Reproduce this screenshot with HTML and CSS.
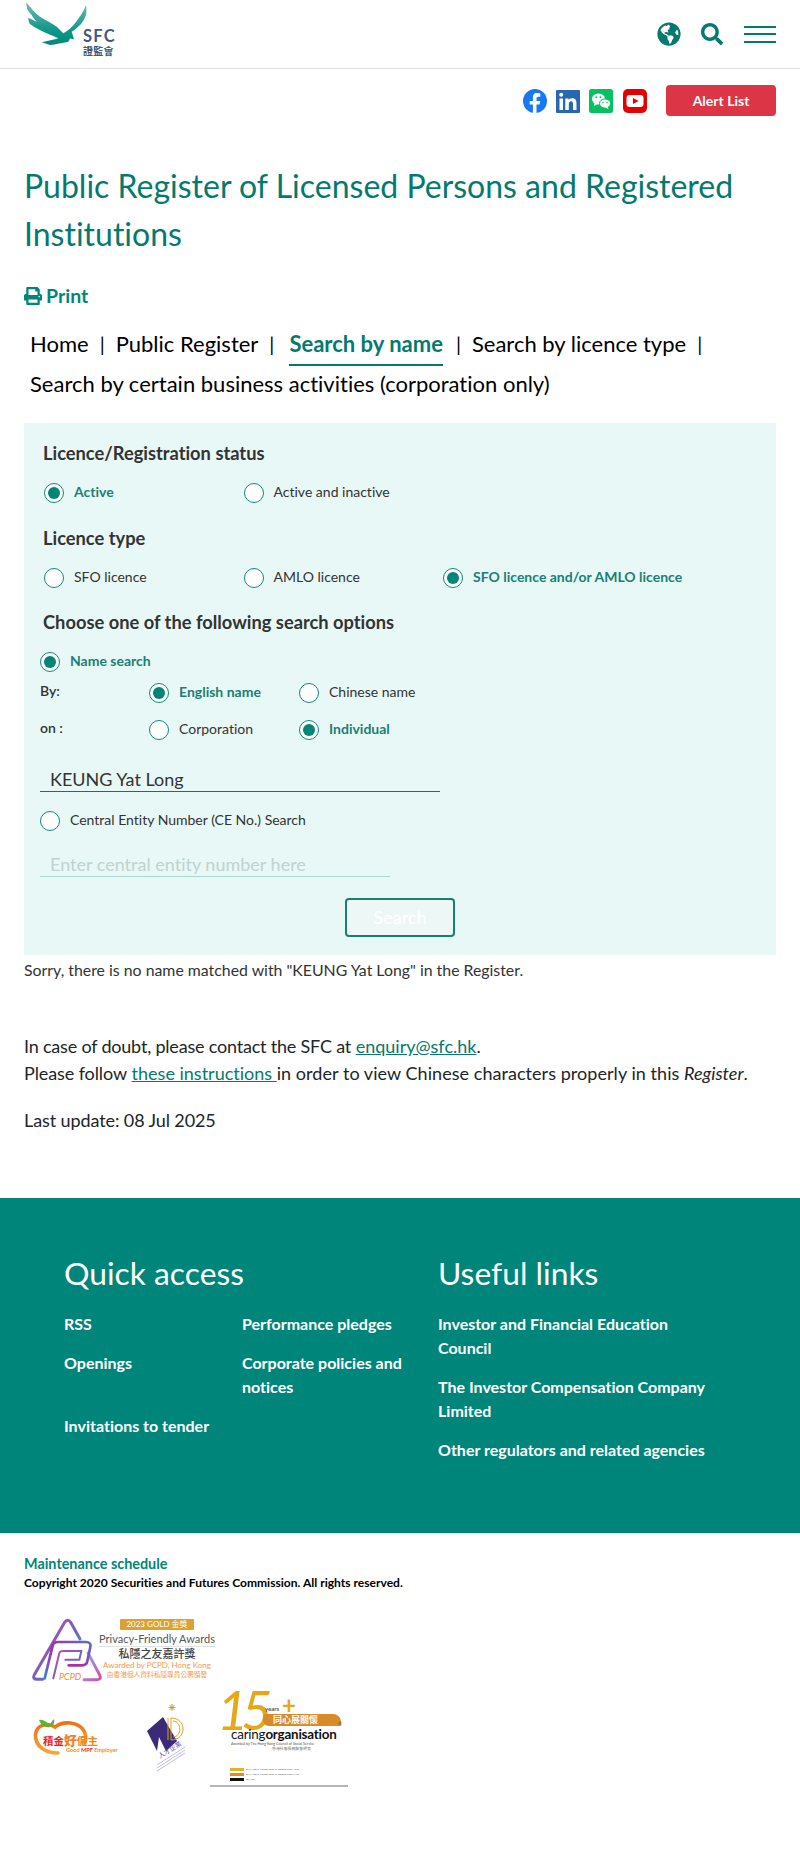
FILE: index.html
```html
<!DOCTYPE html>
<html lang="en">
<head>
<meta charset="utf-8">
<title>Public Register of Licensed Persons and Registered Institutions</title>
<link rel="stylesheet" href="styles.css">
</head>
<body>
<header class="topbar">
  <a class="logo">
    <svg class="eagle" width="64" height="48" viewBox="0 0 64 48" aria-hidden="true">
      <defs><linearGradient id="eg" x1="0" y1="0" x2="0" y2="1"><stop offset="0" stop-color="#6fbdb6"/><stop offset=".65" stop-color="#0d9889"/><stop offset="1" stop-color="#00897b"/></linearGradient></defs>
      <path fill="url(#eg)" d="M2.3 2.3 C7 8 11 13 16 16.7 C22 20.5 28 23 32.7 26.7 L39.3 33.3 C44 31 47.5 27.5 51 23.3 C55.5 17.5 60 11 62 5 C62.5 8.5 62.5 12 62 15 C60.5 19 58.5 22.5 56 25 C53.5 27.5 50.5 30 47.7 31.7 C48.5 34.5 49.5 37 50 39.3 L46 38.5 L44.3 41.7 C38 43 32 44.3 26 45 L17.7 42.3 L31 39.3 L34.3 38.3 C27 35 19 32 12.7 28.3 C10 27 7.5 25.5 5.3 23.3 C4.6 21.5 4.3 19.5 4.3 17.7 L12.7 21.7 C10.5 19.5 9 17.5 7.7 15 C5 12.5 3 9.5 2.7 6.7 Z"/>
    </svg>
    <span class="logo-text"><span class="logo-sfc">SFC</span><span class="logo-cn">證監會</span></span>
  </a>
  <nav class="tools">
    <svg class="globe" width="24" height="24" viewBox="0 0 496 512" aria-hidden="true">
      <path fill="#047a6e" d="M248 8C111.03 8 0 119.03 0 256s111.03 248 248 248 248-111.03 248-248S384.97 8 248 8zm82.29 357.6c-3.9 3.88-7.99 7.95-11.31 11.28-2.99 3-5.1 6.7-6.17 10.71-1.51 5.66-2.73 11.38-4.77 16.87l-17.39 46.85c-13.76 3-28 4.69-42.65 4.69v-27.38c1.69-12.62-7.64-36.26-22.63-51.25-6-6-9.37-14.14-9.37-22.63v-32.01c0-11.64-6.27-22.34-16.46-27.97-14.37-7.95-34.81-19.06-48.81-26.11-11.48-5.78-22.1-13.14-31.65-21.75l-.8-.72a114.792 114.792 0 0 1-18.06-20.74c-9.38-13.77-24.66-36.42-34.59-51.14 20.47-45.5 57.36-82.04 103.2-101.89l24.01 12.01C203.48 89.74 216 82.01 216 70.11v-11.3c7.99-1.29 16.12-2.11 24.39-2.42l28.3 28.3c6.25 6.25 6.25 16.38 0 22.63L264 112l-10.34 10.34c-3.12 3.12-3.12 8.19 0 11.31l4.69 4.69c3.12 3.12 3.12 8.19 0 11.31l-8 8a8.008 8.008 0 0 1-5.66 2.34h-8.99c-2.08 0-4.08.81-5.58 2.27l-9.92 9.65a8.008 8.008 0 0 0-1.58 9.31l15.59 31.19c2.66 5.32-1.21 11.58-7.15 11.58h-5.64c-1.93 0-3.79-.7-5.24-1.96l-9.28-8.06a16.017 16.017 0 0 0-15.55-3.1l-31.17 10.39a11.95 11.95 0 0 0-8.17 11.34c0 4.53 2.56 8.66 6.61 10.69l11.08 5.54c9.41 4.71 19.79 7.16 30.31 7.16s22.59 27.29 32 32h66.75c8.49 0 16.62 3.37 22.63 9.37l13.69 13.69a30.503 30.503 0 0 1 8.93 21.57 46.536 46.536 0 0 1-13.72 32.98zM417 274.25c-5.79-1.45-10.84-5-14.15-9.97l-17.98-26.97a23.97 23.97 0 0 1 0-26.62l19.59-29.38c2.32-3.47 5.5-6.28 9.24-8.15l12.98-6.49C440.2 193.59 448 223.87 448 256c0 8.67-.74 17.16-1.82 25.54L417 274.25z"/>
    </svg>
    <svg class="magnifier" width="22" height="22" viewBox="0 0 512 512" aria-hidden="true">
      <path fill="#047a6e" d="M505 442.7L405.3 343c-4.5-4.5-10.6-7-17-7H372c27.6-35.3 44-79.7 44-128C416 93.1 322.9 0 208 0S0 93.1 0 208s93.1 208 208 208c48.3 0 92.7-16.4 128-44v16.3c0 6.4 2.5 12.5 7 17l99.7 99.7c9.4 9.4 24.6 9.4 33.9 0l28.3-28.3c9.4-9.4 9.4-24.6.1-34zM208 336c-70.7 0-128-57.2-128-128 0-70.7 57.2-128 128-128 70.7 0 128 57.2 128 128 0 70.7-57.2 128-128 128z"/>
    </svg>
    <span class="burger"><i></i><i></i><i></i></span>
  </nav>
</header>

<div class="social">
  <svg width="24" height="24" viewBox="0 0 24 24" aria-hidden="true">
    <circle cx="12" cy="12" r="12" fill="#1877f2"/>
    <path fill="#fff" d="M16.6 15.4 L17.2 12 H13.5 V9.6 C13.5 8.6 14 7.8 15.4 7.8 H17.3 V4.4 C17.3 4.4 15.6 4.1 14 4.1 C10.7 4.1 9.9 6.2 9.9 8.9 V12 H6.7 V15.4 H9.9 V24 H13.5 V15.4 Z"/>
  </svg>
  <svg width="24" height="24" viewBox="0 0 24 24" aria-hidden="true">
    <rect width="24" height="23" y="1" rx="1" fill="#2867b2"/>
    <path fill="#fff" d="M3.5 9.5 H7 V21 H3.5 Z M5.2 3.8 A2 2 0 1 1 5.2 7.8 A2 2 0 1 1 5.2 3.8 Z M9.3 9.5 H12.6 V11 C13.2 10 14.4 9.2 16.1 9.2 C19.6 9.2 20.5 11.4 20.5 14.6 V21 H17 V15.4 C17 14 16.8 12.3 15 12.3 C13.2 12.3 12.8 13.7 12.8 15.3 V21 H9.3 Z"/>
  </svg>
  <svg width="24" height="24" viewBox="0 0 24 24" aria-hidden="true">
    <rect width="24" height="24" rx="2.5" fill="#07c160"/>
    <ellipse cx="9.5" cy="10" rx="6.5" ry="5.5" fill="#fff"/>
    <path fill="#fff" d="M5.5 13.5 L5 17 L8.5 15 Z"/>
    <ellipse cx="16" cy="14.5" rx="5.5" ry="4.6" fill="#fff" stroke="#07c160" stroke-width="1"/>
    <path fill="#fff" d="M18.5 17.5 L19.5 20 L16 18.5 Z"/>
    <circle cx="7.3" cy="8.3" r="1" fill="#07c160"/><circle cx="11.5" cy="8.3" r="1" fill="#07c160"/>
    <circle cx="14" cy="13.5" r=".8" fill="#07c160"/><circle cx="18" cy="13.5" r=".8" fill="#07c160"/>
  </svg>
  <svg width="24" height="24" viewBox="0 0 24 24" aria-hidden="true">
    <rect width="24" height="24" rx="5" fill="#e60000"/>
    <rect x="3.5" y="6" width="17" height="12" rx="3" fill="#fff"/>
    <path fill="#e60000" d="M10 9 L15.5 12 L10 15 Z"/>
  </svg>
  <a class="alert">Alert List</a>
</div>

<main class="content">
  <h1 class="title">Public Register of Licensed Persons and Registered Institutions</h1>
  <a class="print">
    <svg width="18" height="18" viewBox="0 0 512 512" aria-hidden="true">
      <path fill="#008577" d="M448 192V77.25c0-8.49-3.37-16.62-9.37-22.63L393.37 9.37c-6-6-14.14-9.37-22.63-9.37H96C78.33 0 64 14.33 64 32v160c-35.35 0-64 28.65-64 64v112c0 8.84 7.16 16 16 16h48v96c0 17.67 14.33 32 32 32h320c17.67 0 32-14.33 32-32v-96h48c8.84 0 16-7.16 16-16V256c0-35.35-28.65-64-64-64zm-64 256H128v-96h256v96zm0-224H128V64h192v48c0 8.84 7.16 16 16 16h48v96zm48 72c-13.25 0-24-10.75-24-24 0-13.26 10.75-24 24-24s24 10.74 24 24c0 13.25-10.75 24-24 24z"/>
    </svg>
    Print
  </a>
  <nav class="crumbs">
    <a>Home</a><span class="sep">|</span><a>Public Register</a><span class="sep">|</span><a class="current">Search by name</a><span class="sep">|</span><a>Search by licence type</a><span class="sep">|</span><a>Search by certain business activities (corporation only)</a>
  </nav>

  <form class="panel">
    <h2 class="group-title">Licence/Registration status</h2>
    <div class="radio-row">
      <label class="radio on w200"><i></i>Active</label>
      <label class="radio"><i></i>Active and inactive</label>
    </div>
    <h2 class="group-title">Licence type</h2>
    <div class="radio-row">
      <label class="radio w200"><i></i>SFO licence</label>
      <label class="radio w200"><i></i>AMLO licence</label>
      <label class="radio on"><i></i>SFO licence and/or AMLO licence</label>
    </div>
    <h2 class="group-title">Choose one of the following search options</h2>
    <label class="radio on tight name-search"><i></i>Name search</label>
    <div class="opt-row by-row">
      <span class="opt-label">By:</span>
      <label class="radio on w150"><i></i>English name</label>
      <label class="radio"><i></i>Chinese name</label>
    </div>
    <div class="opt-row on-row">
      <span class="opt-label">on :</span>
      <label class="radio w150"><i></i>Corporation</label>
      <label class="radio on"><i></i>Individual</label>
    </div>
    <div class="field name-field">KEUNG Yat Long</div>
    <label class="radio tight ce-search"><i></i>Central Entity Number (CE No.) Search</label>
    <div class="field ce-field">Enter central entity number here</div>
    <div class="actions"><button type="button" class="search">Search</button></div>
  </form>

  <p class="notice">Sorry, there is no name matched with "KEUNG Yat Long" in the Register.</p>
  <p class="doubt"><span class="snug">In case of doubt, please contact the SFC at</span> <a>enquiry@sfc.hk</a>.<br><span class="snug-lead">Please follow</span> <a>these instructions </a><span class="loose">in order to view Chinese characters properly in this</span> <em>Register</em>.</p>
  <p class="update">Last update: 08 Jul 2025</p>
</main>

<footer class="footer">
  <div class="quick">
    <h3>Quick access</h3>
    <ul class="quick-list">
      <li>RSS</li><li>Performance pledges</li>
      <li>Openings</li><li>Corporate policies and notices</li>
      <li>Invitations to tender</li>
    </ul>
  </div>
  <div class="useful">
    <h3>Useful links</h3>
    <ul>
      <li>Investor and Financial Education Council</li>
      <li>The Investor Compensation Company Limited</li>
      <li>Other regulators and related agencies</li>
    </ul>
  </div>
</footer>

<section class="legal">
  <a class="maint">Maintenance schedule</a>
  <p class="copy">Copyright 2020 Securities and Futures Commission. All rights reserved.</p>
  <div class="award-pcpd">
    <div class="pcpd-mark">
      <svg width="72" height="66" viewBox="90 200 216 198" aria-hidden="true">
        <defs>
          <linearGradient id="pg" x1="0" y1="0" x2="1" y2="1"><stop offset="0" stop-color="#d9409f"/><stop offset=".55" stop-color="#6f62c4"/><stop offset="1" stop-color="#4fb6e6"/></linearGradient>
          <linearGradient id="pg2" x1="0" y1="1" x2="1" y2="0"><stop offset="0" stop-color="#3f7fd0"/><stop offset=".5" stop-color="#b02ba0"/><stop offset="1" stop-color="#5a6cd0"/></linearGradient>
          <linearGradient id="pg3" x1="0" y1="0" x2="1" y2="1"><stop offset="0" stop-color="#7fb8ee"/><stop offset="1" stop-color="#d94aa8"/></linearGradient>
        </defs>
        <path d="M128 387 H112 Q96 387 103 373 L194 216 Q203 204 212 216 L240 266" fill="none" stroke="url(#pg)" stroke-width="9" stroke-linecap="round"/>
        <path d="M264 308 L298 372 Q306 388 290 388 H252" fill="none" stroke="url(#pg3)" stroke-width="9" stroke-linecap="round"/>
        <path d="M134 384 L158 286 Q160 275 174 275 H258 Q274 275 271 290 L262 332 Q260 345 246 345 H206" fill="none" stroke="url(#pg2)" stroke-width="8" stroke-linecap="round"/>
        <path d="M160 384 L178 308 Q180 302 190 302 H244 L238 328 H196" fill="none" stroke="url(#pg)" stroke-width="6" stroke-linecap="round"/>
      </svg>
      <span class="pcpd-word">PCPD</span>
    </div>
    <div class="pcpd-text">
      <span class="gold">2023 GOLD 金獎</span>
      <span class="pf">Privacy-Friendly Awards</span>
      <span class="pf-cn">私隱之友嘉許獎</span>
      <span class="pf-by">Awarded by PCPD, Hong Kong</span>
      <span class="pf-by2">由香港個人資料私隱專員公署頒發</span>
    </div>
  </div>
  <div class="awards">
    <div class="mpf">
      <svg width="56" height="38" viewBox="0 0 56 38" aria-hidden="true">
        <defs><linearGradient id="ag" x1="0" y1="0" x2="0" y2="1"><stop offset="0" stop-color="#f0701a"/><stop offset="1" stop-color="#f8a52a"/></linearGradient></defs>
        <path d="M22 8 C14 3 3 6 2.5 16 C2 27 12 34 25 34" fill="none" stroke="url(#ag)" stroke-width="3.6" stroke-linecap="round"/>
        <path d="M22 8 C30 2 45 2 51 12 C53 16 53 20 52 23" fill="none" stroke="url(#ag)" stroke-width="3.6" stroke-linecap="round"/>
        <path d="M6 1 C10 0 15 3 17 8 C12 9 8 6 6 1 Z M17 8 C17 4 19 2 21 0 C22 4 20 7 17 8 Z" fill="#5cb531"/>
      </svg>
      <span class="mpf-cn">積金<b>好</b><em>僱主</em></span>
      <span class="mpf-en">Good <u>MPF</u> Employer</span>
    </div>
    <div class="manpower">
      <svg width="40" height="70" viewBox="0 0 40 70" aria-hidden="true">
        <path d="M25 1 V8 M21.5 4.5 H28.5 M22.5 2 L27.5 7 M27.5 2 L22.5 7" stroke="#c49a3a" stroke-width="1"/>
        <path d="M0 28 L16 14 L30 38 L19 48 L12 34 L10 48 Z" fill="#3b2a76"/>
        <path d="M21 15 V37 M24 15 V37 M24 15 C40 15 40 37 24 37 M26 18 C35 18 35 34 26 34" fill="none" stroke="#d9a520" stroke-width="1"/>
        <path d="M10 62 L38 44 M10 65 L38 47 M10 68 L38 50" stroke="#a8a1d2" stroke-width=".7"/>
      </svg>
      <span class="mp-cn">人才企業</span>
    </div>
    <div class="caring">
      <span class="c15">15</span><span class="cyears">years</span><span class="cplus">+</span>
      <span class="cbrush">同心展關懷</span><span class="creg">®</span>
      <span class="cname">caring<b>organisation</b></span>
      <span class="cby">Awarded by The Hong Kong Council of Social Service</span>
      <span class="cby2">香港社會服務聯會頒發</span>
      <span class="swatch s1"></span><span class="swatch s2"></span><span class="swatch s3"></span>
      <span class="sw-note n1">BM/Y100/K Process Color or Pantone Color 137C</span>
      <span class="sw-note n2">BM/Y100/K Process Color or Pantone Color 717C</span>
      <span class="sw-note n3">BL/100</span>
    </div>
  </div>
</section>
</body>
</html>
```

FILE: styles.css
```css
* { box-sizing: border-box; }
html, body { margin: 0; padding: 0; }
body { width: 800px; height: 1869px; background: #fff; color: #212529; font-family: Lato, "Noto Sans CJK TC", sans-serif; font-size: 18px; line-height: 27px; overflow: hidden; font-variant-ligatures: none; }
a { color: inherit; }
h1, h2, h3, p, ul { margin: 0; padding: 0; }
ul { list-style: none; }

.topbar { height: 69px; border-bottom: 1px solid #dee2e6; display: flex; justify-content: space-between; padding: 0 24px; }
.logo { display: flex; align-items: flex-start; }
.logo-text { display: flex; flex-direction: column; margin: 28px 0 0 -5px; color: #3f5a7d; }
.logo-sfc { font-size: 16.5px; font-weight: 700; letter-spacing: 1.2px; line-height: 17px; }
.logo-cn { font-size: 10px; line-height: 12px; letter-spacing: .3px; font-weight: 700; }
.tools { display: flex; align-items: center; gap: 20px; }
.burger { width: 32px; margin-left: 1px; display: flex; flex-direction: column; gap: 5.5px; }
.burger i { display: block; height: 2px; background: #047a6e; }

.social { display: flex; justify-content: flex-end; align-items: center; padding: 15px 24px 0 0; height: 48px; gap: 9.33px; }
.alert { background: #dc3545; color: #fff; width: 110px; height: 31px; border-radius: 4px; font-size: 14px; font-weight: 700; line-height: 31px; text-align: center; margin-left: 10px; }

.content { padding: 0 24px; }
.title { color: #047a6e; font-size: 32px; font-weight: 400; line-height: 48px; margin-top: 45px; }
.print { display: flex; align-items: center; gap: 4px; color: #008577; font-weight: 700; font-size: 19.5px; margin-top: 24px; height: 27px; }
.crumbs { display: flex; flex-wrap: wrap; font-size: 22px; color: #000; margin-top: 15px; padding-left: 6px; line-height: 40px; }
.crumbs .sep { margin: 0 11px; font-size: 20px; }
.crumbs .current { color: #047a6e; font-weight: 700; border-bottom: 2px solid #047a6e; height: 42px; margin: 0 2px -2px 4px; }

.panel { background: #e8f8f6; margin-top: 19px; height: 532px; padding: 17px 19px 0; color: #333; }
.group-title { font-size: 18.3px; font-weight: 700; line-height: 27px; color: #333; }
.radio-row { display: flex; margin: 16px 0 21.5px; padding-left: 1px; }
.radio { display: flex; align-items: center; font-size: 14px; line-height: 18px; gap: 10px; color: #333; padding-bottom: 2px; }
.radio i { width: 20px; height: 20px; margin-bottom: -2px; border: 1px solid #12877a; border-radius: 50%; background: #fff; flex: none; position: relative; }
.radio.on { color: #1a8074; font-weight: 700; }
.radio.on i::after { content: ""; position: absolute; inset: 3px; border-radius: 50%; background: #008577; }
.w200 { width: 199.5px; }
.w150 { width: 150px; }
.tight { margin-left: -3px; }
.name-search { margin-top: 15.5px; }
.opt-row { display: flex; align-items: center; margin-left: -3px; }
.by-row { margin-top: 11px; }
.on-row { margin-top: 17px; }
.opt-label { width: 109px; font-size: 14px; line-height: 20px; font-weight: 600; margin-top: -4px; }
.field { font-size: 18px; line-height: 20px; padding-left: 10px; margin-left: -3px; }
.name-field { width: 400px; margin-top: 29px; height: 23px; border-bottom: 1px solid #047a6e; color: #333; }
.ce-search { margin-top: 19px; }
.ce-field { width: 350px; margin-top: 23px; height: 23px; border-bottom: 1px solid #a9d8d0; color: #bfd3d0; }
.actions { margin-top: 21px; padding-left: 302px; }
.search { display: block; width: 110px; height: 39px; background: #edf8f6; border: 2px solid #17806f; border-radius: 4px; color: #fff; font-family: inherit; font-size: 18px; }

.notice { font-size: 15.85px; line-height: 24px; margin-top: 3px; color: #333; }
.doubt { margin-top: 50.5px; font-size: 18px; line-height: 27px; color: #212529; }
.snug { letter-spacing: -.2px; }
.snug-lead { letter-spacing: -.1px; }
.loose { letter-spacing: .05px; }
.doubt a { color: #047a6e; text-decoration: underline; }
.update { margin-top: 20px; letter-spacing: -.1px; }

.footer { margin-top: 64.5px; background: #00857a; color: #fff; height: 335px; padding: 54px 40px 0 64px; display: grid; grid-template-columns: 374px 1fr; }
.footer h3 { font-size: 31.8px; font-weight: 400; line-height: 42px; margin-bottom: 18px; }
.footer li { font-size: 16px; font-weight: 700; line-height: 24px; margin-bottom: 15px; }
.quick-list { display: grid; grid-template-columns: 178px 170px; }
.useful li { width: 270px; }

.legal { padding: 20.5px 24px 0; }
.maint { display: block; color: #008577; font-size: 14.4px; font-weight: 700; line-height: 19px; }
.copy { font-size: 12.05px; font-weight: 700; color: #000; line-height: 19px; }
.award-pcpd { display: flex; margin: 25px 0 0 6px; height: 72px; }
.pcpd-mark { position: relative; width: 72px; height: 66px; flex: none; }
.pcpd-mark svg { display: block; }
.pcpd-word { position: absolute; left: 29px; top: 54px; font-size: 9px; line-height: 11px; font-style: italic; color: #f58a1f; }
.pcpd-text { display: flex; flex-direction: column; align-items: center; width: 120px; margin: 2px 0 0 -5px; }
.pcpd-text span { white-space: nowrap; }
.gold { width: 74px; height: 11px; text-align: center; background: #d9a232; color: #fff; font-size: 8px; line-height: 11px; border-radius: 1px; margin-bottom: 1px; }
.pf { font-size: 11px; line-height: 15px; color: #555; border-bottom: 1px solid #e2e2e2; }
.pf-cn { font-size: 11px; line-height: 14px; color: #444; font-weight: 500; }
.pf-by { font-size: 8px; line-height: 9px; color: #f79a4c; }
.pf-by2 { font-size: 6.7px; line-height: 9px; color: #f79a4c; }

.awards { display: flex; margin-top: 3.5px; padding-left: 9px; }
.mpf { position: relative; width: 84px; height: 94px; flex: none; }
.mpf svg { position: absolute; left: 0; top: 27px; }
.mpf-cn { position: absolute; left: 10px; top: 41px; font-size: 10.5px; line-height: 14px; color: #e5261f; font-weight: 700; white-space: nowrap; }
.mpf-cn b { color: #f5821f; font-size: 13px; }
.mpf-cn em { color: #f5821f; font-style: normal; }
.mpf-en { position: absolute; left: 33px; top: 54px; font-size: 5.6px; line-height: 7px; font-weight: 700; color: #f58a1f; white-space: nowrap; }
.mpf-en u { color: #e5261f; text-decoration: none; }
.manpower { position: relative; width: 38px; height: 94px; flex: none; margin-left: 30px; padding-top: 11px; }
.manpower svg { display: block; }
.mp-cn { position: absolute; left: 10px; top: 54px; font-size: 6.5px; line-height: 8px; color: #5a4f9e; white-space: nowrap; transform: rotate(-32deg); }
.caring { position: relative; width: 138px; height: 95px; flex: none; margin-left: 25px; border-bottom: 2px solid #b5b5b5; }
.caring span { position: absolute; white-space: nowrap; }
.c15 { left: 7px; top: 1px; font-size: 54px; line-height: 34px; font-style: italic; font-weight: 400; color: #e6a817; letter-spacing: -7px; }
.cyears { left: 55px; top: 13px; font-size: 6px; line-height: 8px; font-weight: 700; color: #555; }
.cplus { left: 72px; top: 4px; font-size: 24px; line-height: 18px; font-weight: 700; color: #e6a817; }
.cbrush { left: 53px; top: 22px; width: 78px; height: 12px; background: #d98a2a; color: #fff; font-size: 9px; line-height: 12px; font-weight: 700; padding-left: 10px; border-radius: 4px 8px 2px 6px; }
.creg { left: 128px; top: 29px; font-size: 5px; line-height: 6px; color: #555; }
.cname { left: 21px; top: 35px; font-size: 13.4px; line-height: 14px; color: #111; letter-spacing: -.2px; }
.cby { left: 21px; top: 50px; font-size: 3.6px; line-height: 4px; color: #555; }
.cby2 { left: 62px; top: 54px; font-size: 3.9px; line-height: 5px; color: #777; }
.swatch { left: 20px; width: 14px; height: 3px; }
.s1 { top: 76px; background: #e6b020; }
.s2 { top: 81px; background: #e08a20; }
.s3 { top: 86px; background: #111; }
.sw-note { left: 36px; font-size: 2.4px; line-height: 3px; color: #555; }
.n1 { top: 76px; }
.n2 { top: 81px; }
.n3 { top: 86px; }
```
